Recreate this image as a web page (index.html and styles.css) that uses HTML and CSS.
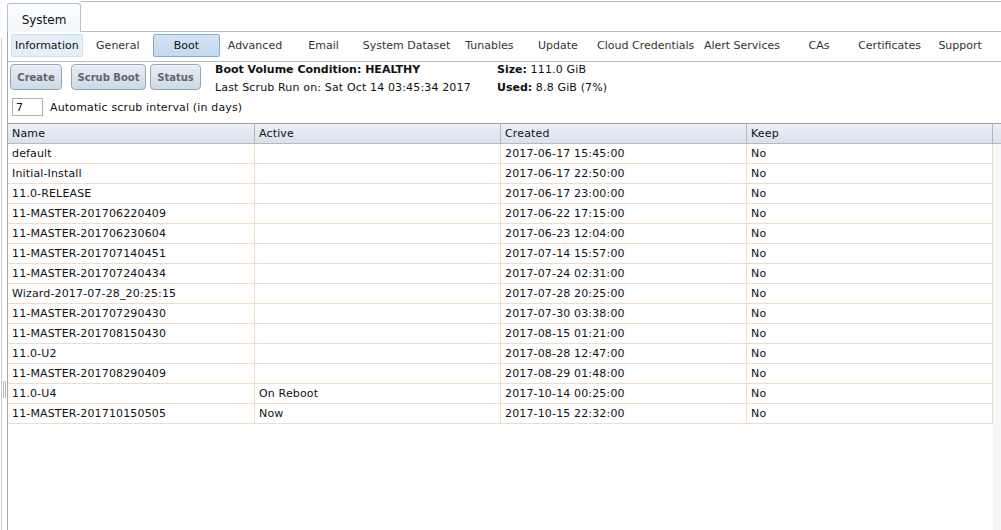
FILE: index.html
```html
<!DOCTYPE html>
<html>
<head>
<meta charset="utf-8">
<link rel="stylesheet" href="styles.css">
</head>
<body>
<div class="app">
  <div class="gutter">
    <div class="gutter-line"></div>
    <div class="grip"></div>
  </div>
  <div class="main">
    <div class="tabbar">
      <div class="tab-system">System</div>
      <div class="tabbar-rest"></div>
    </div>
    <div class="pane">
      <div class="subtabs">
        <div class="subtab subtab-info">Information</div>
        <div class="subtab">General</div>
        <div class="subtab subtab-active">Boot</div>
        <div class="subtab">Advanced</div>
        <div class="subtab">Email</div>
        <div class="subtab">System Dataset</div>
        <div class="subtab">Tunables</div>
        <div class="subtab">Update</div>
        <div class="subtab">Cloud Credentials</div>
        <div class="subtab">Alert Services</div>
        <div class="subtab">CAs</div>
        <div class="subtab">Certificates</div>
        <div class="subtab">Support</div>
      </div>
      <div class="toolbar">
        <button class="btn btn-create">Create</button>
        <button class="btn btn-scrub">Scrub Boot</button>
        <button class="btn btn-status">Status</button>
        <div class="info info-cond">
          <div class="info-line"><b>Boot Volume Condition: HEALTHY</b></div>
          <div class="info-line">Last Scrub Run on: Sat Oct 14 03:45:34 2017</div>
        </div>
        <div class="info">
          <div class="info-line"><b>Size:</b> 111.0 GiB</div>
          <div class="info-line"><b>Used:</b> 8.8 GiB (7%)</div>
        </div>
      </div>
      <div class="interval">
        <input class="interval-input" type="text" value="7">
        <span class="interval-label">Automatic scrub interval (in days)</span>
      </div>
      <div class="grid">
        <div class="grid-head">
          <div class="hcell c1">Name</div>
          <div class="hcell c2">Active</div>
          <div class="hcell c3">Created</div>
          <div class="hcell c4">Keep</div>
          <div class="hcell-scroll"></div>
        </div>
        <div class="grid-body">
          <div class="rows">
            <div class="row"><div class="cell c1">default</div><div class="cell c2"></div><div class="cell c3">2017-06-17 15:45:00</div><div class="cell c4">No</div></div>
            <div class="row"><div class="cell c1">Initial-Install</div><div class="cell c2"></div><div class="cell c3">2017-06-17 22:50:00</div><div class="cell c4">No</div></div>
            <div class="row"><div class="cell c1">11.0-RELEASE</div><div class="cell c2"></div><div class="cell c3">2017-06-17 23:00:00</div><div class="cell c4">No</div></div>
            <div class="row"><div class="cell c1">11-MASTER-201706220409</div><div class="cell c2"></div><div class="cell c3">2017-06-22 17:15:00</div><div class="cell c4">No</div></div>
            <div class="row"><div class="cell c1">11-MASTER-201706230604</div><div class="cell c2"></div><div class="cell c3">2017-06-23 12:04:00</div><div class="cell c4">No</div></div>
            <div class="row"><div class="cell c1">11-MASTER-201707140451</div><div class="cell c2"></div><div class="cell c3">2017-07-14 15:57:00</div><div class="cell c4">No</div></div>
            <div class="row"><div class="cell c1">11-MASTER-201707240434</div><div class="cell c2"></div><div class="cell c3">2017-07-24 02:31:00</div><div class="cell c4">No</div></div>
            <div class="row"><div class="cell c1">Wizard-2017-07-28_20:25:15</div><div class="cell c2"></div><div class="cell c3">2017-07-28 20:25:00</div><div class="cell c4">No</div></div>
            <div class="row"><div class="cell c1">11-MASTER-201707290430</div><div class="cell c2"></div><div class="cell c3">2017-07-30 03:38:00</div><div class="cell c4">No</div></div>
            <div class="row"><div class="cell c1">11-MASTER-201708150430</div><div class="cell c2"></div><div class="cell c3">2017-08-15 01:21:00</div><div class="cell c4">No</div></div>
            <div class="row"><div class="cell c1">11.0-U2</div><div class="cell c2"></div><div class="cell c3">2017-08-28 12:47:00</div><div class="cell c4">No</div></div>
            <div class="row"><div class="cell c1">11-MASTER-201708290409</div><div class="cell c2"></div><div class="cell c3">2017-08-29 01:48:00</div><div class="cell c4">No</div></div>
            <div class="row"><div class="cell c1">11.0-U4</div><div class="cell c2">On Reboot</div><div class="cell c3">2017-10-14 00:25:00</div><div class="cell c4">No</div></div>
            <div class="row"><div class="cell c1">11-MASTER-201710150505</div><div class="cell c2">Now</div><div class="cell c3">2017-10-15 22:32:00</div><div class="cell c4">No</div></div>
          </div>
          <div class="vscroll"></div>
        </div>
      </div>
    </div>
  </div>
</div>
</body>
</html>
```
FILE: styles.css
```css
* { box-sizing: border-box; }
html, body { margin: 0; padding: 0; }
body {
  background: #fff;
  font-family: "DejaVu Sans", Verdana, sans-serif;
  font-size: 11px;
  letter-spacing: 0.15px;
  color: #111;
  width: 1001px;
  height: 530px;
  overflow: hidden;
}
b { letter-spacing: 0; }
.app { display: flex; height: 530px; }

.gutter { width: 7px; position: relative; }
.gutter-line {
  margin-top: 38px;
  margin-left: 1px;
  width: 1px;
  height: 492px;
  background: #c9c9c9;
}
.grip {
  position: absolute;
  left: 3px;
  top: 381px;
  width: 3px;
  height: 17px;
  border-left: 1px solid #b5b5b5;
  border-right: 1px solid #b5b5b5;
}

.main { flex: 1; display: flex; flex-direction: column; min-width: 0; }

.tabbar { display: flex; height: 32px; align-items: flex-end; }
.tab-system {
  width: 74px;
  height: 29px;
  border: 1px solid #b4c2d0;
  border-bottom: none;
  border-radius: 3px 3px 0 0;
  background: linear-gradient(#fbfcfd, #f3f6f9);
  font-size: 12px;
  letter-spacing: 0;
  color: #111;
  text-align: center;
  line-height: 33px;
}
.tabbar-rest {
  flex: 1;
  align-self: stretch;
  margin-top: 1px;
  border-top: 1px solid #b8bcc2;
  border-bottom: 1px solid #b8bcc2;
}

.pane {
  flex: 1;
  border-left: 1px solid #a9a9a9;
  display: flex;
  flex-direction: column;
  min-height: 0;
}

.subtabs {
  display: flex;
  height: 30px;
  padding: 2px 0 0 3px;
  border-bottom: 1px solid #b9bcc0;
  align-items: flex-start;
}
.subtab {
  min-width: 67px;
  height: 23px;
  padding: 0 3px;
  margin-right: 1.6px;
  text-align: center;
  line-height: 21px;
  font-size: 11px;
  letter-spacing: 0;
  color: #333;
  border: 1px solid transparent;
  border-radius: 2px;
  white-space: nowrap;
}
.subtab-info {
  background: #e5eff9;
  border-color: #cddff0;
  color: #111;
}
.subtab-active {
  background: linear-gradient(#d2e3f4, #c4d9ef);
  border-color: #86aad0;
  color: #111;
}

.toolbar {
  display: flex;
  align-items: flex-start;
  padding: 2px 0 0 2px;
  height: 34px;
}
.btn {
  height: 26px;
  padding: 0;
  border: 1px solid #93a7bc;
  border-radius: 4px;
  background: linear-gradient(#e8eef4, #cdd9e5);
  box-shadow: inset 0 1px 0 #f4f7fa;
  font-family: "DejaVu Sans", Verdana, sans-serif;
  font-weight: bold;
  font-size: 10px;
  color: #5e6670;
}
.btn-create { width: 52px; margin-right: 9px; }
.btn-scrub { width: 75px; margin-right: 4px; }
.btn-status { width: 51px; margin-right: 14px; }

.info { line-height: 18px; margin-top: -3px; }
.info-cond { width: 282px; }
.info-line { white-space: nowrap; }

.interval {
  display: flex;
  align-items: center;
  padding-left: 4px;
  height: 20px;
  margin-top: 1px;
}
.interval-input {
  width: 31px;
  height: 18px;
  border: 1px solid #b3b3b3;
  padding: 0 0 0 3px;
  font-family: "DejaVu Sans", Verdana, sans-serif;
  font-size: 11px;
  color: #111;
  margin: 0 7px 0 0;
}
.interval-label { color: #111; }

.grid {
  margin-top: 6px;
  flex: 1;
  display: flex;
  flex-direction: column;
  min-height: 0;
}
.grid-head {
  display: flex;
  height: 21px;
  border-top: 1px solid #a3a3a3;
  border-bottom: 1px solid #b6b9bd;
  background: linear-gradient(#eaf0f6, #d8e2ec);
}
.hcell {
  height: 19px;
  line-height: 20px;
  padding-left: 4px;
  border-right: 1px solid #b3b6ba;
  color: #111;
}
.hcell-scroll { flex: 1; }
.c1 { width: 247px; }
.c2, .c3, .c4 { width: 246px; }

.grid-body { flex: 1; display: flex; min-height: 0; }
.rows { width: 985px; }
.row { display: flex; height: 20px; border-bottom: 1px solid #f1dcc6; }
.cell {
  height: 19px;
  line-height: 19px;
  padding-left: 4px;
  border-right: 1px solid #f1dcc6;
  white-space: nowrap;
}
.vscroll { flex: 1; background: #f6f7f9; }
```
